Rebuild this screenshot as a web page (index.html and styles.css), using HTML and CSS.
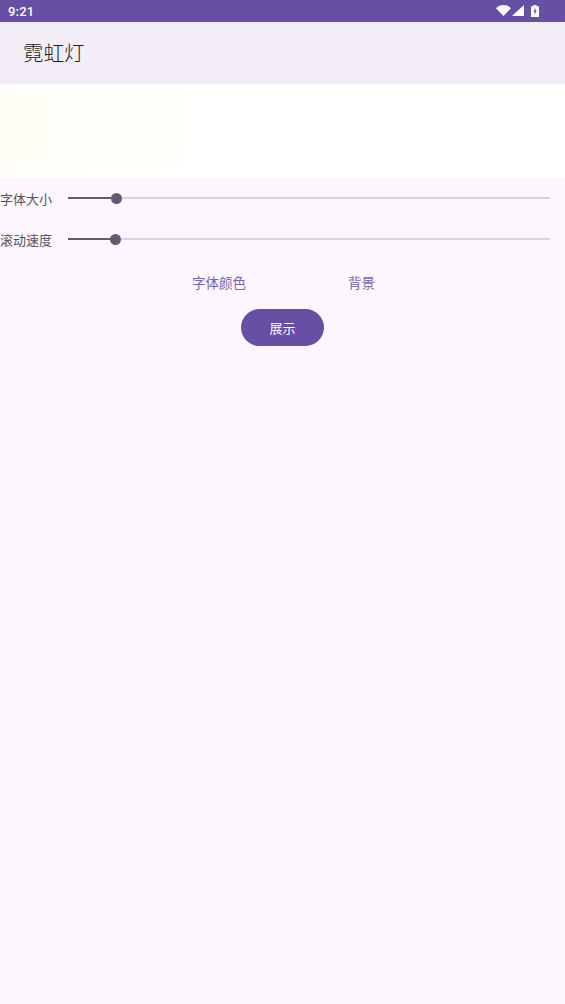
FILE: index.html
```html
<!DOCTYPE html>
<html lang="zh">
<head>
<meta charset="utf-8">
<title>霓虹灯</title>
<link rel="stylesheet" href="styles.css">
</head>
<body>
<div class="status">
  <span class="time">9:21</span>
  <div class="status-icons">
    <svg class="i-wifi" width="15" height="11" viewBox="0 0 15 11"><path d="M0 3.2C2 1.2 4.6 0 7.5 0S13 1.2 15 3.2L7.5 11z" fill="#fff"/></svg>
    <svg class="i-signal" width="12" height="11" viewBox="0 0 12 11"><path d="M12 0V11H0z" fill="#fff"/></svg>
    <svg class="i-batt" width="8" height="12" viewBox="0 0 8 12"><path d="M2.5 0h3v1.2H8V12H0V1.2h2.5z" fill="#fff"/><path d="M4.4 2.6 2.4 6.8h1.3V9.8L5.7 5.6H4.4z" fill="#6750a4"/></svg>
  </div>
</div>
<header class="appbar">霓虹灯</header>
<div class="preview"><div class="glow"></div></div>
<main class="content">
  <div class="row row-size">
    <span class="label">字体大小</span>
    <div class="slider"><div class="active a1"></div><div class="thumb"></div><div class="rest"></div></div>
  </div>
  <div class="row row-speed">
    <span class="label">滚动速度</span>
    <div class="slider"><div class="active a2"></div><div class="thumb"></div><div class="rest"></div></div>
  </div>
  <div class="links">
    <span class="link">字体颜色</span>
    <span class="link">背景</span>
  </div>
  <div class="action"><button class="btn">展示</button></div>
</main>
</body>
</html>
```
FILE: styles.css
```css
* { box-sizing: border-box; }
html, body { margin: 0; padding: 0; }
body {
  width: 565px;
  height: 1004px;
  overflow: hidden;
  background: #fef7ff;
  font-family: Roboto, "Noto Sans CJK SC", sans-serif;
  display: flex;
  flex-direction: column;
}
.status {
  height: 22px;
  background: #6750a4;
  color: #fff;
  display: flex;
  align-items: center;
  justify-content: space-between;
  padding: 0 26px 1px 8px;
  flex: none;
}
.time { font-size: 13px; font-weight: 500; letter-spacing: .2px; padding-top: 2px; }
.status-icons { display: flex; align-items: center; gap: 1px; }
.i-batt { margin-left: 6px; }
.appbar {
  height: 61px;
  flex: none;
  background: #f3edf7;
  color: #1d1b20;
  font-size: 20.5px;
  font-weight: 300;
  line-height: 61px;
  padding-left: 23px;
  box-shadow: 0 1px 2px rgba(0,0,0,.07);
  position: relative;
  font-family: "Noto Sans CJK SC", sans-serif;
}
.preview {
  height: 95px;
  flex: none;
  background: #fff;
  padding-top: 7px;
}
.glow {
  width: 186px;
  height: 80px;
  background: linear-gradient(90deg, #fffcee 0, #fffdf5 8px, #fffef9 60%, #fffefb 100%);
  filter: blur(3px);
}
.content { flex: 1; display: flex; flex-direction: column; }
.row { display: flex; align-items: center; height: 20px; }
.row-size { margin-top: 10px; }
.row-speed { margin-top: 21px; }
.label {
  width: 68px;
  font-size: 13px;
  color: #56525c;
  font-family: "Noto Sans CJK SC", sans-serif;
  flex: none;
}
.slider { display: flex; align-items: center; width: 482px; }
.active { height: 2px; background: #625b71; }
.a1 { width: 43px; }
.a2 { width: 42px; }
.thumb { width: 11px; height: 11px; border-radius: 50%; background: #625b71; flex: none; }
.rest { flex: 1; height: 2px; background: #d9d3de; }
.links {
  display: flex;
  margin-top: 23px;
  padding-left: 192px;
  gap: 102px;
}
.link {
  font-size: 13.5px;
  line-height: 20px;
  color: #7764ad;
  font-family: "Noto Sans CJK SC", sans-serif;
}
.action { display: flex; justify-content: center; margin-top: 17px; }
.btn {
  width: 83px;
  height: 37px;
  border: 0;
  border-radius: 19px;
  background: #6750a4;
  color: #fff;
  font-size: 13px;
  font-family: "Noto Sans CJK SC", sans-serif;
  padding: 0;
}
```
